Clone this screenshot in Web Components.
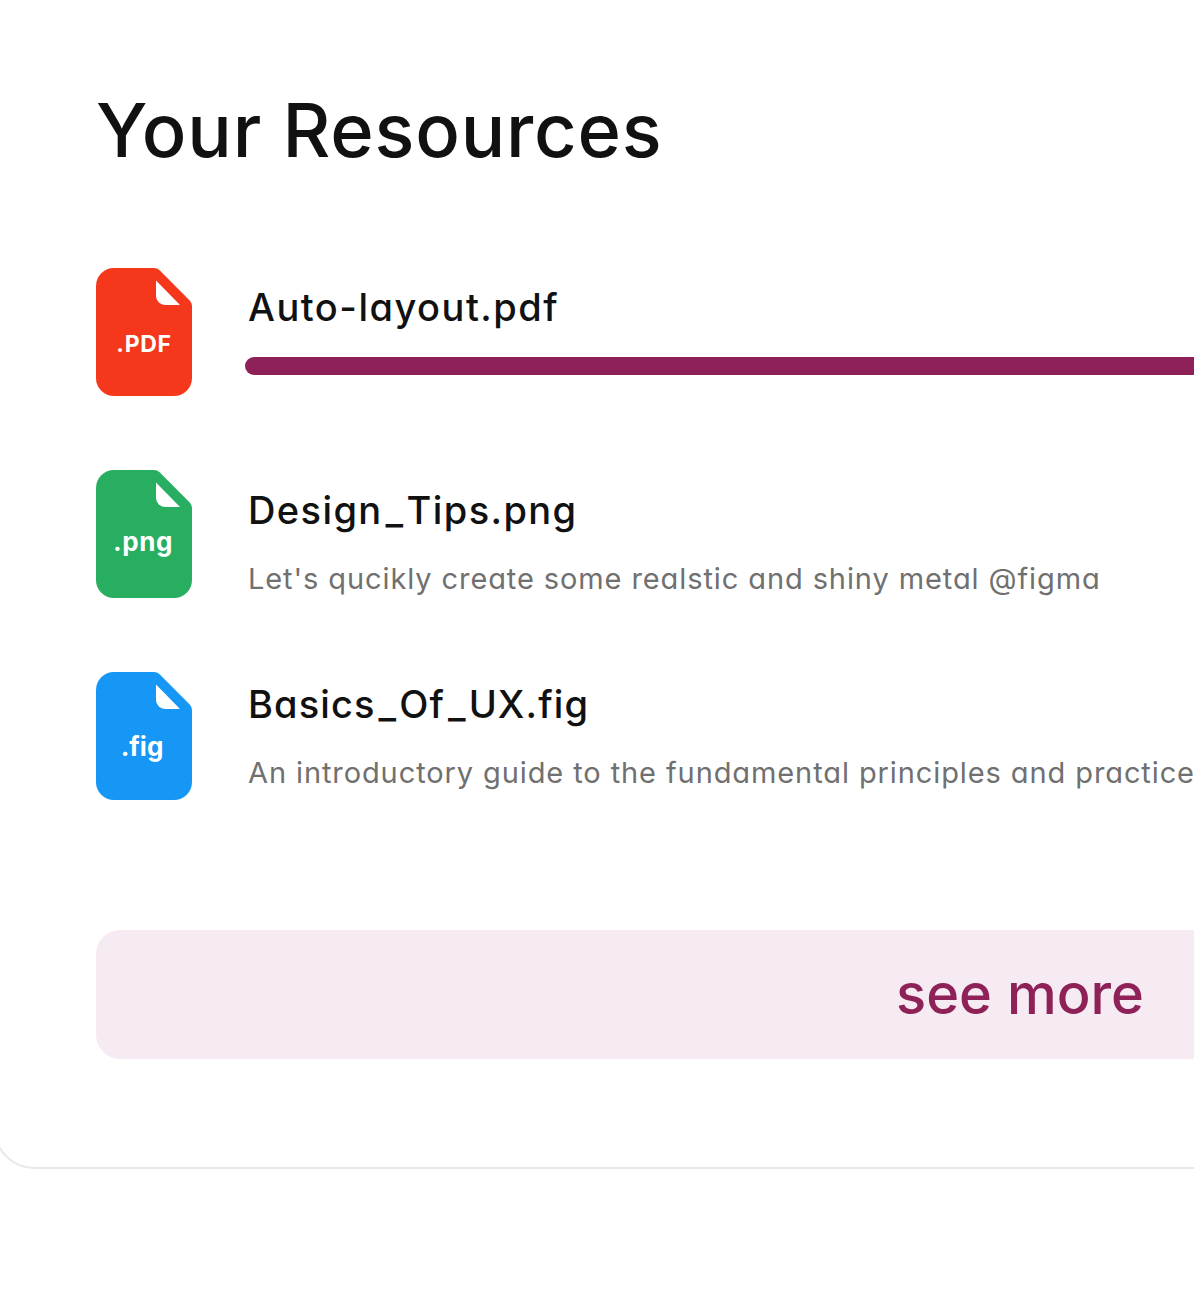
<!DOCTYPE html>
<html>
<head>
<meta charset="utf-8">
<title>Your Resources</title>
<style>
    html, body { margin: 0; height: 100%; overflow: hidden; background: #fff; }
</style>
</head>
<body>
<resources-card>
    <file-row kind="pdf" name="Auto-layout.pdf" top="17" gap="0" spacing="1.5" progress></file-row>
    <file-row kind="png" name="Design_Tips.png" top="18" gap="27" spacing="1.4" desc="Let's qucikly create some realstic and shiny metal @figma"></file-row>
    <file-row kind="fig" name="Basics_Of_UX.fig" top="10" gap="27" spacing="1.1" desc="An introductory guide to the fundamental principles and practices of user experience design"></file-row>
</resources-card>
<script>
// Icono de archivo
const FILE_KINDS = {
    pdf: { color: '#f5381b', label: '.PDF', x: 48, y: 83.5, size: 23, spacing: 0.7 },
    png: { color: '#27ae60', label: '.png', x: 47, y: 81, size: 26, spacing: 0.6 },
    fig: { color: '#1696f5', label: '.fig', x: 46, y: 84, size: 26, spacing: 0 }
};
class FileIcon extends HTMLElement {
    constructor() {
        super();
        this.attachShadow({ mode: 'open' });
    }
    connectedCallback() {
        const kind = FILE_KINDS[this.getAttribute('kind')];
        this.shadowRoot.innerHTML = `
            <style>
                :host { display: block; flex: 0 0 96px; width: 96px; height: 128px; }
                svg { display: block; }
                text { font-family: 'Inter', sans-serif; font-weight: 700; fill: #fff; text-anchor: middle; }
            </style>
            <svg width="96" height="128" viewBox="0 0 96 128">
                <path fill="${kind.color}" d="M18 0H58a8 8 0 0 1 5.600 2.300L93.700 32.400a8 8 0 0 1 2.300 5.600V110a18 18 0 0 1-18 18H18a18 18 0 0 1-18-18V18A18 18 0 0 1 18 0Z"/>
                <path fill="#fff" d="M60 12.500L84 37H69a9 9 0 0 1-9-9Z"/>
                <text x="${kind.x}" y="${kind.y}" font-size="${kind.size}" letter-spacing="${kind.spacing}">${kind.label}</text>
            </svg>
        `;
    }
}
customElements.define('file-icon', FileIcon);

// Fila de un recurso
class FileRow extends HTMLElement {
    constructor() {
        super();
        this.attachShadow({ mode: 'open' });
    }
    connectedCallback() {
        const progress = this.hasAttribute('progress');
        const below = progress
            ? '<div class="bar"></div>'
            : `<div class="desc">${this.getAttribute('desc')}</div>`;
        const name = this.getAttribute('name').split('_').join('<span class="us">_</span>');
        this.shadowRoot.innerHTML = `
            <style>
                :host { display: flex; gap: 56px; height: 128px; }
                .info {
                    flex: 1; min-width: 0; display: flex; flex-direction: column;
                    padding-top: ${this.getAttribute('top')}px;
                }
                .name {
                    font: 500 38px/44px 'Inter', sans-serif;
                    font-feature-settings: 'cv11' 1;
                    letter-spacing: ${this.getAttribute('spacing')}px;
                    color: #111;
                    white-space: nowrap;
                }
                .us { margin: 0 2px 0 3px; }
                .desc {
                    margin-top: ${this.getAttribute('gap')}px;
                    font: 400 29px/40px 'Inter', sans-serif;
                    font-feature-settings: 'cv11' 1;
                    letter-spacing: 0.9px;
                    color: #707070;
                    white-space: nowrap;
                }
                .bar { margin: 28px 0 0 -3px; height: 18px; border-radius: 9px; background: #8e2157; }
            </style>
            <file-icon kind="${this.getAttribute('kind')}"></file-icon>
            <div class="info">
                <div class="name">${name}</div>
                ${below}
            </div>
        `;
    }
}
customElements.define('file-row', FileRow);

// Boton de ver mas
class SeeMore extends HTMLElement {
    constructor() {
        super();
        this.attachShadow({ mode: 'open' });
    }
    connectedCallback() {
        this.shadowRoot.innerHTML = `
            <style>
                :host {
                    display: flex; align-items: center; justify-content: center;
                    width: 1848px; height: 129px; margin-top: 130px; padding-bottom: 2px;
                    box-sizing: border-box;
                    border-radius: 24px;
                    background: #f6ebf2;
                    color: #8e2157;
                    font: 500 56px/1 'Inter', sans-serif;
                }
            </style>
            <slot></slot>
        `;
    }
}
customElements.define('see-more', SeeMore);

// Tarjeta principal
class ResourcesCard extends HTMLElement {
    constructor() {
        super();
        this.attachShadow({ mode: 'open' });
    }
    connectedCallback() {
        this.shadowRoot.innerHTML = `
            <style>
                :host {
                    display: block;
                    box-sizing: border-box;
                    width: 2100px;
                    height: 1399px;
                    margin: -230px 0 0 -6px;
                    padding: 314px 0 0 100px;
                    border: 2px solid #e8e8e8;
                    border-radius: 40px;
                    background: #fff;
                }
                h1 { margin: 0; font: 500 74px/88px 'Inter', sans-serif; letter-spacing: 0.8px; color: #111; }
                .list { display: flex; flex-direction: column; gap: 74px; margin-top: 94px; }
            </style>
            <h1>Your Resources</h1>
            <div class="list"><slot></slot></div>
            <see-more>see more</see-more>
        `;
    }
}
customElements.define('resources-card', ResourcesCard);
</script>
</body>
</html>
